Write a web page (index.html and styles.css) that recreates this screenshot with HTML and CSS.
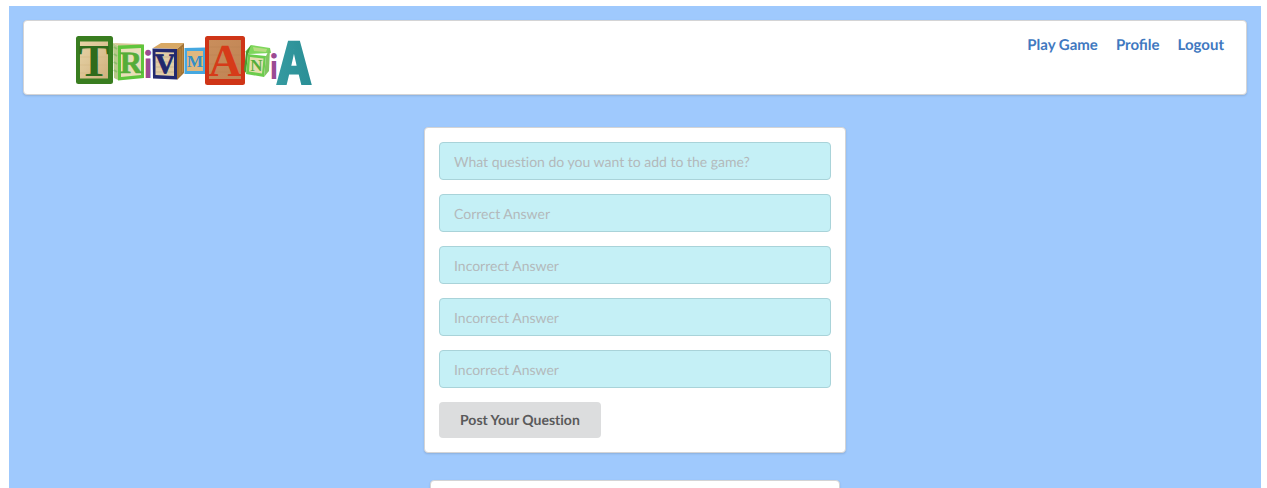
FILE: index.html
```html
<!DOCTYPE html>
<html lang="en">
<head>
<meta charset="utf-8">
<title>Trivmania</title>
<link rel="stylesheet" href="styles.css">
</head>
<body>
<div class="page">
  <header class="segment header">
    <svg class="logo" viewBox="0 0 234 50" role="img" aria-label="Trivmania">
      <defs>
        <linearGradient id="wood" x1="0" y1="0" x2="1" y2="1">
          <stop offset="0" stop-color="#e6d3a6"/><stop offset=".5" stop-color="#dcc394"/><stop offset="1" stop-color="#cfb07c"/>
        </linearGradient>
        <linearGradient id="darkwood" x1="0" y1="0" x2="1" y2="1">
          <stop offset="0" stop-color="#c98e5c"/><stop offset="1" stop-color="#c08454"/>
        </linearGradient>
        <linearGradient id="teal" x1="0" y1="0" x2="1" y2="0">
          <stop offset="0" stop-color="#359aa0"/><stop offset="1" stop-color="#2a8f96"/>
        </linearGradient>
      </defs>
      <!-- T block -->
      <rect width="37" height="48" rx="2.5" fill="#397d20"/>
      <rect x="4" y="5.5" width="28" height="37" fill="url(#wood)"/>
      <path d="M4 13H32M4 21H32M4 29H32M4 37H32" stroke="#d0b583" stroke-width=".5"/>
      <text class="serif" x="18" y="40" font-size="46" fill="#2f6b1b">T</text>
      <!-- R block -->
      <path d="M37 7L65 8L68 9L42 10Z" fill="#d8c795"/>
      <path d="M37 7L42 10V44L38 42Z" fill="#b9c98a"/>
      <path d="M38 11L41 13M38 18L41 20M38 26L41 28M38 34L41 36" stroke="#8fbd6c" stroke-width="2"/>
      <path d="M42 9.5L68 8.5V42L42 44.5Z" fill="#5fc53c"/>
      <path d="M45 13L65 12V39L45 41Z" fill="#e9dfb9"/>
      <text class="serif" x="55" y="37" font-size="31" fill="#55ad39" stroke="#55ad39" stroke-width=".5">R</text>
      <text class="sans" x="72" y="42" font-size="38" fill="#9b4b93">i</text>
      <!-- V block -->
      <path d="M77 12L85 7L108 7L101 13Z" fill="#d8a864"/>
      <path d="M101 13L108 7V37L101 44Z" fill="#a47434"/>
      <path d="M104 13V39M106.500 11V36" stroke="#c08d45" stroke-width=".8"/>
      <path d="M76.500 12.500L101 13V43.500L77 42.500Z" fill="#22296f"/>
      <path d="M79.500 16L98 16.500V40L79.500 39Z" fill="#e2cda5"/>
      <path d="M80 21H98M80 26H98M80 31H98M80 36H98" stroke="#bba68c" stroke-width=".6"/>
      <text class="serif" x="89" y="37" font-size="28" fill="#20286d" stroke="#20286d" stroke-width=".8">V</text>
      <!-- M block -->
      <path d="M108.500 12L129 11.500V38H108.500Z" fill="#45a8e0"/>
      <rect x="111" y="15" width="16" height="20" fill="#dfb880"/>
      <text class="serif" x="119" y="31" font-size="17" fill="#318fc7">M</text>
      <!-- A block -->
      <rect x="129" y="0" width="40" height="49" rx="2.500" fill="#cf3517"/>
      <rect x="133" y="4" width="32" height="39" fill="url(#darkwood)"/>
      <path d="M133 11H165M133 19H165M133 28H165M133 36H165" stroke="#bb8052" stroke-width=".5"/>
      <text class="serif" x="149" y="40" font-size="46" fill="#d63b19">A</text>
      <!-- N block -->
      <path d="M175 9L194 12L195 17L173 18L169 16Z" fill="#7ed75b"/>
      <path d="M177 11L191 13L190 16L178 15Z" fill="#b7dc83"/>
      <path d="M175 9L172 18L170 37L168 34L170 16Z" fill="#4b9c34"/>
      <path d="M172 18L190 20L188 41L170 38Z" fill="#6bcc4d"/>
      <path d="M190 20L194 12L193 35L188 41Z" fill="#80c660"/>
      <path d="M174 21L187.500 22.500L186 37.500L173 35.500Z" fill="#e4dfae"/>
      <text class="serif" x="180.500" y="35" font-size="17" fill="#56ad3a">N</text>
      <text class="sans" x="198" y="43" font-size="35" fill="#9b4b93">i</text>
      <text class="block" x="218" y="48" font-size="58" fill="url(#teal)" stroke="url(#teal)" stroke-width="2">A</text>
    </svg>
    <nav class="nav">
      <a href="#">Play Game</a>
      <a href="#">Profile</a>
      <a href="#">Logout</a>
    </nav>
  </header>
  <main class="content">
    <form class="segment form">
      <input type="text" placeholder="What question do you want to add to the game?" aria-label="Question">
      <input type="text" placeholder="Correct Answer" aria-label="Correct answer">
      <input type="text" placeholder="Incorrect Answer" aria-label="First incorrect answer">
      <input type="text" placeholder="Incorrect Answer" aria-label="Second incorrect answer">
      <input type="text" placeholder="Incorrect Answer" aria-label="Third incorrect answer">
      <button class="submit" type="submit">Post Your Question</button>
    </form>
    <section class="segment questions"></section>
  </main>
</div>
</body>
</html>
```
FILE: styles.css
```css
* {
  box-sizing: border-box;
}

body {
  margin: 0;
  padding: 6px 6px 0 9px;
  background: #fff;
  font-family: Lato, "Liberation Sans", sans-serif;
  font-size: 14px;
  text-rendering: geometricPrecision;
}

.page {
  display: flex;
  flex-direction: column;
  height: calc(100vh - 6px);
  padding: 14px 14px 0;
  overflow: hidden;
  background: #9fc9fd;
}

.segment {
  flex-shrink: 0;
  background: #fff;
  border: 1px solid #d4d4d5;
  border-radius: 4px;
  box-shadow: 0 1px 2px rgba(34, 36, 38, 0.15);
}

.header {
  display: flex;
  align-items: flex-start;
  justify-content: space-between;
  padding: 15px 22px 8px 52px;
}

.logo {
  display: block;
  width: 234px;
  height: 50px;
  overflow: visible;
}

.logo text {
  font-weight: 700;
  text-anchor: middle;
}

.serif {
  font-family: "Liberation Serif", serif;
}

.sans {
  font-family: Lato, sans-serif;
}

.block {
  font-family: "DejaVu Sans Mono", monospace;
}

.nav {
  display: flex;
  gap: 18px;
}

.nav a {
  color: #4078c0;
  font-size: 15px;
  font-weight: 700;
  line-height: 18px;
  text-decoration: none;
}

.content {
  display: flex;
  flex-direction: column;
  align-items: center;
  gap: 27px;
  padding-top: 32px;
}

.form {
  display: flex;
  flex-direction: column;
  align-items: flex-start;
  gap: 14px;
  width: 100%;
  max-width: 422px;
  padding: 14px;
}

.form input,
.submit {
  border-radius: 4px;
  font: inherit;
  font-variant-ligatures: none;
  text-rendering: inherit;
}

.form input {
  width: 100%;
  height: 38px;
  padding: 0 14px;
  background: #c5f0f6;
  border: 1px solid #a9d3d9;
  color: #333;
}

.form input::placeholder {
  color: #b3b9bb;
}

.submit {
  height: 36px;
  padding: 0 21px 2px;
  background: #dcddde;
  border: 0;
  color: #5a5a5b;
  font-weight: 700;
}

.questions {
  width: 100%;
  max-width: 410px;
  min-height: 120px;
}
```
